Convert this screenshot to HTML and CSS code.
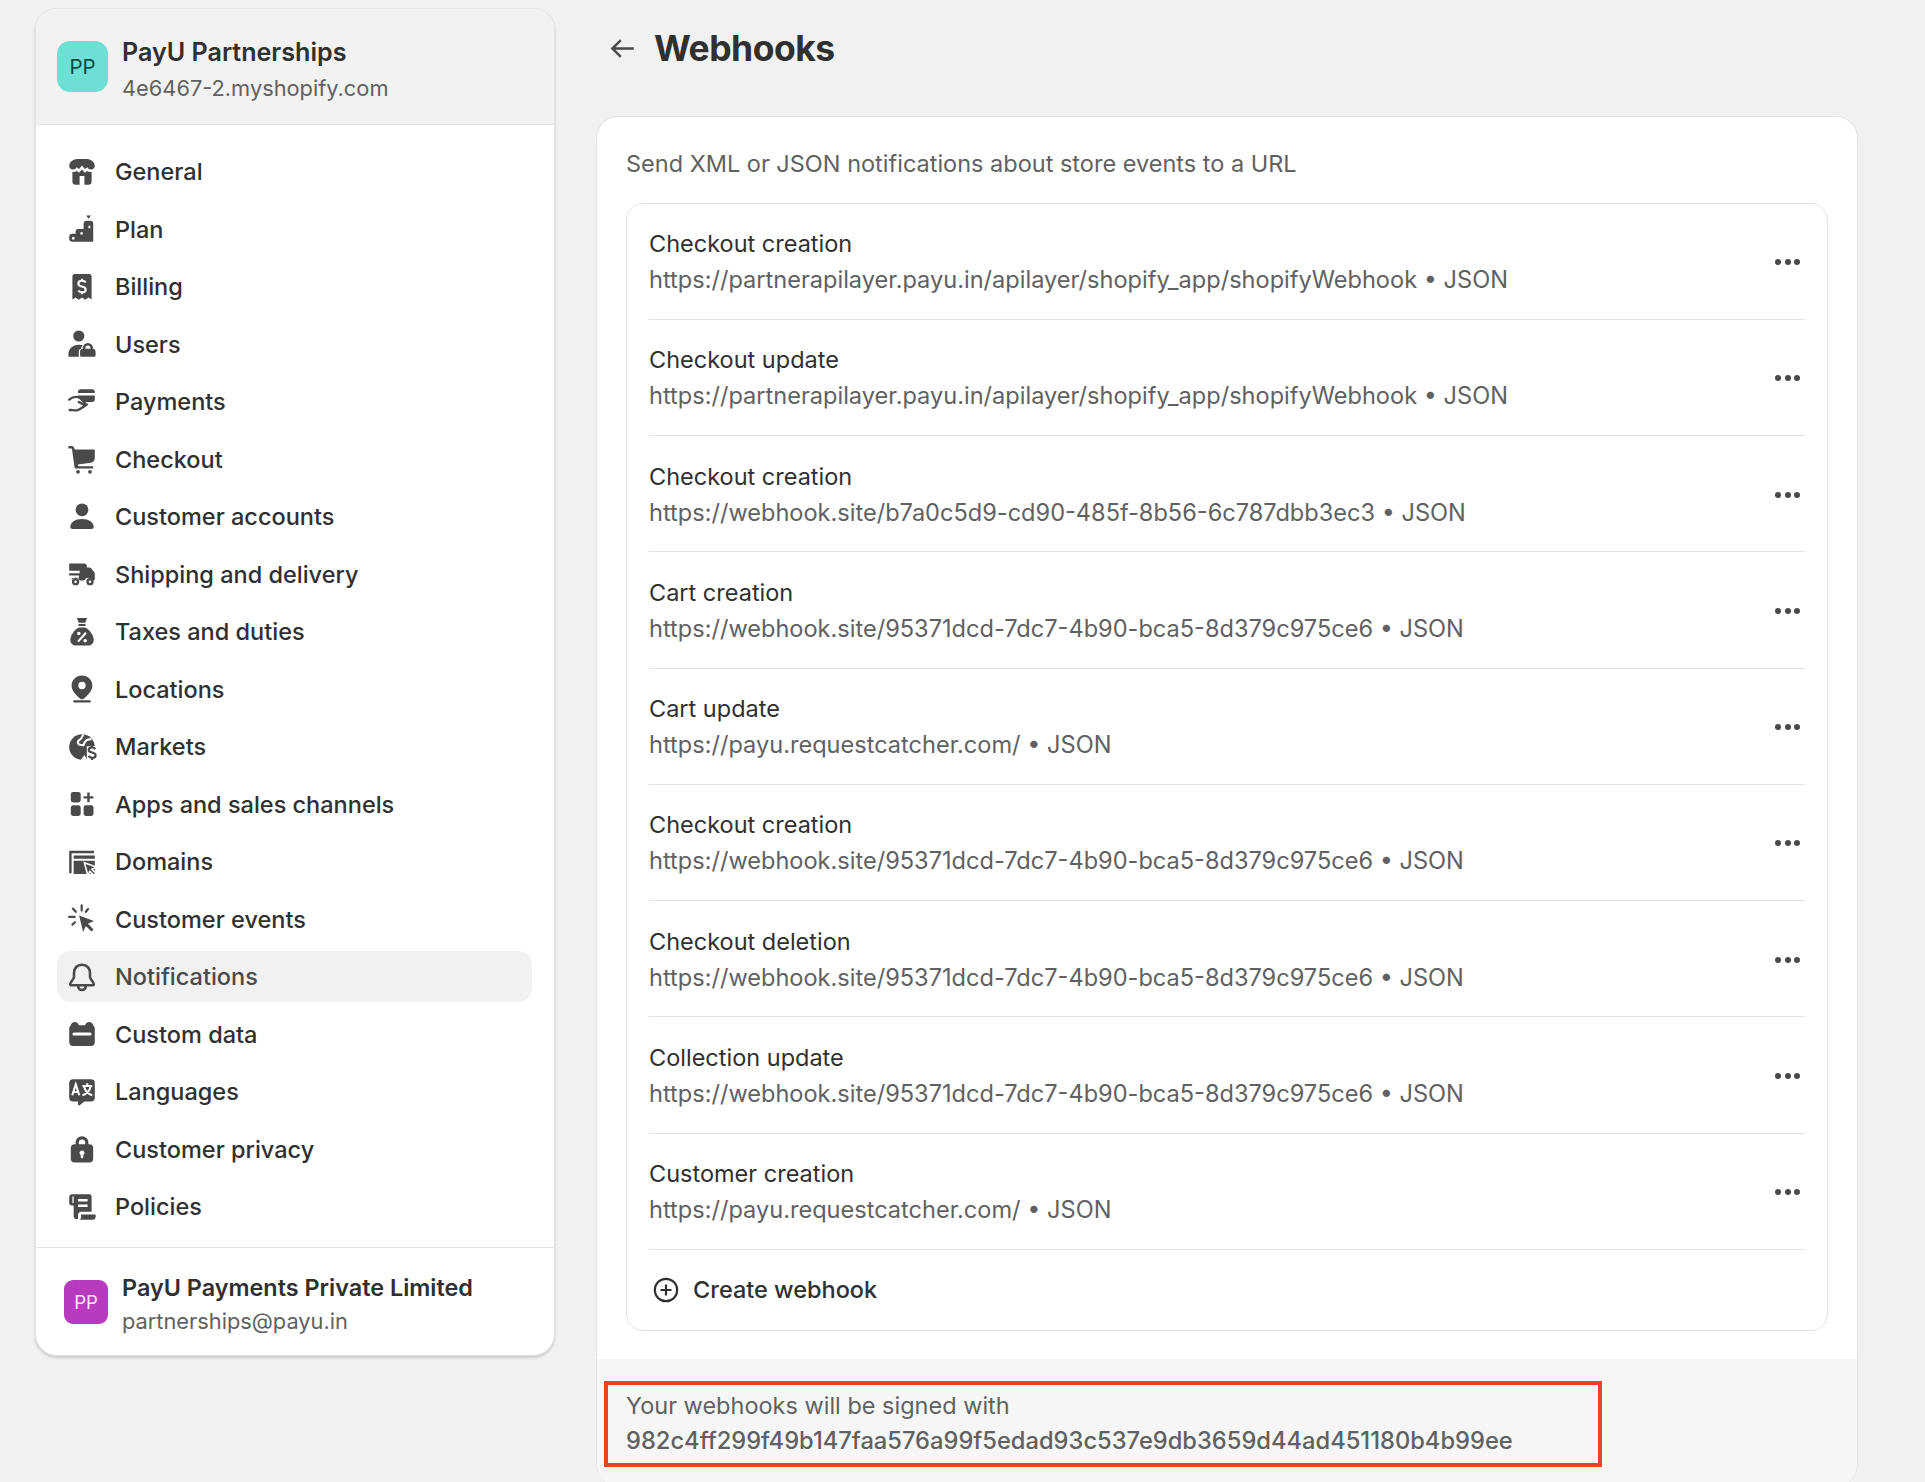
FILE: index.html
```html
<!DOCTYPE html>
<html lang="en">
<head>
<meta charset="utf-8">
<title>Webhooks</title>
<link rel="stylesheet" href="styles.css">
</head>
<body>
<div class="page">
<aside class="sidebar">
  <header class="store">
    <div class="avatar avatar-store">PP</div>
    <div class="who"><div class="who-name">PayU Partnerships</div><div class="who-sub">4e6467-2.myshopify.com</div></div>
  </header>
  <nav class="nav">
    <a class="nav-item"><svg class="ico" viewBox="0 0 20 20"><path d="M4.400 8.400C3 8.400 2 7.500 2 6.200 2 3.800 4.600 1.800 7 1.800h6c2.400 0 5 2 5 4.400 0 1.300-1 2.200-2.400 2.200-1 0-1.800-.5-2.200-1.400l-1.600 1.200L10 6 8.200 8.200 6.600 7c-.4.900-1.200 1.400-2.200 1.400z"/><path fill-rule="evenodd" d="M4 10c1 .1 2-.1 2.800-.6l1.400 1L10 8.500l1.800 1.900 1.400-1c.8.500 1.800.7 2.800.6v6a2 2 0 0 1-2 2H6a2 2 0 0 1-2-2zM8.500 12.500V18h3v-5.500z"/></svg><span>General</span></a>
    <a class="nav-item"><svg class="ico" viewBox="0 0 20 20"><path d="M12.600 1.500h3l-1.500 2.100z"/><path fill-rule="evenodd" d="M13 4.800h2.200A1.800 1.800 0 0 1 17 6.600V18H4a2 2 0 0 1-2-2v-1a2 2 0 0 1 2-2h2v-1.500A1.500 1.500 0 0 1 7.500 10H11V6.800a2 2 0 0 1 2-2zM3.800 15v1.500h1.500V15zM9 12v1.500h1.500V12zM14 8v1.500h1.200V8z"/></svg><span>Plan</span></a>
    <a class="nav-item"><svg class="ico" viewBox="0 0 20 20"><path d="M5.500 1.800h9A1.500 1.500 0 0 1 16 3.300v14.500l-2-1.300-2 1.500-2-1.500-2 1.500-2-1.500-2 1.300V3.300a1.500 1.500 0 0 1 1.500-1.500z"/><path class="cut" d="M12.300 7.200c-.5-.8-1.300-1.100-2.300-1.100-1.300 0-2.300.7-2.300 1.800 0 2.400 4.600 1.200 4.600 3.600 0 1.100-1 1.800-2.300 1.800-1 0-1.800-.4-2.300-1.100M10 4.800v1.300M10 13.300v1.300"/></svg><span>Billing</span></a>
    <a class="nav-item"><svg class="ico" viewBox="0 0 20 20"><circle cx="8" cy="5" r="3.500"/><path d="M1.500 18v-1.500C1.500 13.200 4 10.500 8 10.500c1 0 1.700.1 2.400.4a3 3 0 0 0-1 2.100h-.2c-.5 0-1.200.6-1.200 1.500V18z"/><path fill-rule="evenodd" d="M10.500 13v-.5a3.200 3.200 0 0 1 6.400 0v.5a1.800 1.800 0 0 1 1.600 1.800V17a1 1 0 0 1-1 1H9.800a1 1 0 0 1-1-1v-2.200A1.800 1.800 0 0 1 10.500 13zm1.600 0h3.200v-.5a1.600 1.600 0 0 0-3.200 0z"/></svg><span>Users</span></a>
    <a class="nav-item"><svg class="ico" viewBox="0 0 20 20"><path d="M7.500 3.500c0-.8.700-1.500 1.500-1.500h7.500c.8 0 1.500.7 1.500 1.500v.8H7.500zM7.500 6H18v2.500c0 .8-.7 1.500-1.500 1.500h-5.200L9 7.800H7.500z"/><path class="cut2" d="M2 8.500c2-1.800 4-2 6.300-1.500l3.300 3.300c.5.500-.1 1.500-1.100 1L8 10M2.300 15c1.500-.2 2.700.5 4.500.2 1.500-.3 4.500-2.500 6.200-3.700"/></svg><span>Payments</span></a>
    <a class="nav-item"><svg class="ico" viewBox="0 0 20 20"><path d="M1.500 1.800h2c.8 0 1.500.5 1.700 1.300l.2.900H18v5.500c0 1.500-1.200 2.500-2.500 2.800l-8.100 1.200.2 1H17V16H6.500c-.6 0-1-.4-1.200-1L3.700 3.500H1.500z"/><circle cx="7.500" cy="18" r="1.200"/><circle cx="15" cy="18" r="1.200"/></svg><span>Checkout</span></a>
    <a class="nav-item"><svg class="ico" viewBox="0 0 20 20"><circle cx="10" cy="5.500" r="4"/><path d="M4 17.500c-.8 0-1.300-.5-1.300-1.200 0-2.800 3-5 7.300-5s7.300 2.200 7.300 5c0 .7-.5 1.200-1.300 1.200z"/></svg><span>Customer accounts</span></a>
    <a class="nav-item"><svg class="ico" viewBox="0 0 20 20"><path d="M2 3.500h9.500c.8 0 1.500.7 1.500 1.500v1h1.500c.5 0 1 .2 1.300.6l2 2.500c.2.200.2.500.2.800V13c0 .6-.4 1-1 1h-.6a2.700 2.700 0 0 0-5 0H8.600a2.700 2.700 0 0 0-5-.3v-1.200H8V11H2V9.500h6.500V8H2z"/><path fill-rule="evenodd" d="M6 12.500a2.300 2.300 0 1 0 0 4.600 2.300 2.300 0 0 0 0-4.600zM6 14a.8.800 0 1 1 0 1.600A.8.800 0 0 1 6 14zM15 12.500a2.300 2.300 0 1 0 0 4.600 2.300 2.300 0 0 0 0-4.600zm0 1.500a.8.800 0 1 1 0 1.600.8.800 0 0 1 0-1.600z"/></svg><span>Shipping and delivery</span></a>
    <a class="nav-item"><svg class="ico" viewBox="0 0 20 20"><path d="M6.800 1.200h6.400l-1.200 3H8zM7.800 5h4.400v1.200H7.800z"/><path d="M8 7.200h4c2.800 1.600 5.300 4.800 5.300 7.800 0 2.200-1.500 3.500-3.700 3.500H6.400c-2.200 0-3.700-1.300-3.700-3.500 0-3 2.500-6.200 5.300-7.800z"/><path class="cut" d="M12.500 10.500l-5 5.500"/><circle class="dot" cx="8" cy="11" r="1.100"/><circle class="dot" cx="12" cy="15.500" r="1.100"/></svg><span>Taxes and duties</span></a>
    <a class="nav-item"><svg class="ico" viewBox="0 0 20 20"><path fill-rule="evenodd" d="M10 1.500c3.600 0 6.500 2.800 6.500 6.300 0 3.200-2.300 5.500-5 8-.9.800-2.100.8-3 0-2.700-2.500-5-4.800-5-8 0-3.500 2.900-6.300 6.500-6.300zm0 4a2.300 2.300 0 1 0 0 4.600 2.300 2.300 0 0 0 0-4.600z"/><rect x="4.500" y="17" width="11" height="1.500" rx=".7"/></svg><span>Locations</span></a>
    <a class="nav-item"><svg class="ico" viewBox="0 0 20 20"><circle cx="10" cy="10" r="8"/><path class="cut" d="M10.800 2.200c-.6 1.300-.8 2.300-2 3-1 .6-1.700 1.500-1.200 2.600.6 1.200 2.300.8 3.300 1.100.4-1.300.9-2.800 2.200-3.300 1-.4 1.800-.5 2.800-.5"/><path class="dot" d="M13 9.500h8v10h-8z"/><path class="dot" d="M9 18.500l2.500-3.500 2 3.500z"/><path class="cut3" d="M18.300 11.400c-.4-.8-1.100-1.200-2-1.200-1.200 0-2.100.6-2.100 1.600 0 2.200 4.300 1.100 4.300 3.300 0 1-1 1.700-2.200 1.700-1 0-1.700-.4-2.200-1.200M16.300 8.700v1.500M16.300 16.800v1.400"/></svg><span>Markets</span></a>
    <a class="nav-item"><svg class="ico" viewBox="0 0 20 20"><rect x="3" y="2.500" width="6.200" height="6.500" rx="1.500"/><rect x="3" y="10.800" width="6.200" height="6.700" rx="1.500"/><rect x="11" y="10.800" width="6.200" height="6.700" rx="1.500"/><path d="M13.300 2.800h1.500v2.300h2.300v1.500h-2.300v2.300h-1.500V6.600H11V5.100h2.300z"/></svg><span>Apps and sales channels</span></a>
    <a class="nav-item"><svg class="ico" viewBox="0 0 20 20"><path d="M2 3h15.500v1.500H3.500V17H2z"/><path d="M4.800 6H18v2H4.800zM4.800 9.200H18v8.300H4.800z"/><path class="arrow" d="M11.500 10.500l7.500 2.700-2.800 1.300 2.500 2.500-1.300 1.300-2.500-2.500-1.200 2.800z"/></svg><span>Domains</span></a>
    <a class="nav-item"><svg class="ico" viewBox="0 0 20 20"><path d="M8.200 7.800l9.300 3.500-3.800 1.700 3.500 3.500-1.300 1.300-3.500-3.500-1.700 3.800z"/><path class="cut2 thick" d="M9.800 1.500v3.200M4.300 3.500l1.800 2M2 8.700h3.400M4 13.500l1.600-1.500M13.800 3.800l-1.400 1.700"/></svg><span>Customer events</span></a>
    <a class="nav-item active"><svg class="ico" viewBox="0 0 20 20"><path class="line" d="M10 2.300c-3 0-5 2.200-5 5V10c0 1.300-2.400 3.200-2.400 4.400 0 .5.400.8 1 .8h12.800c.6 0 1-.3 1-.8 0-1.200-2.400-3.100-2.400-4.400V7.300c0-2.800-2-5-5-5z"/><path class="line" d="M7.600 15.300c0 1.700 1 2.800 2.400 2.800s2.400-1.100 2.400-2.800"/></svg><span>Notifications</span></a>
    <a class="nav-item"><svg class="ico" viewBox="0 0 20 20"><path fill-rule="evenodd" d="M5.500 2.500c1.300 0 2.300.9 2.500 2h4c.2-1.100 1.200-2 2.500-2s2.300.9 2.500 2.200c.6.400 1 1.100 1 1.800V15a2.500 2.500 0 0 1-2.500 2.500h-11A2.500 2.500 0 0 1 2 15V6.500c0-.7.400-1.400 1-1.800.2-1.300 1.200-2.200 2.500-2.200zM5 9a1 1 0 0 0 0 2h10a1 1 0 0 0 0-2z"/></svg><span>Custom data</span></a>
    <a class="nav-item"><svg class="ico" viewBox="0 0 20 20"><path d="M4.500 2h11A2.500 2.500 0 0 1 18 4.500v9a2.500 2.500 0 0 1-2.500 2.500h-4l-3 2.300c-.5.300-1-.1-1-.6V16h-3A2.500 2.500 0 0 1 2 13.500v-9A2.500 2.500 0 0 1 4.500 2z"/><path class="cut" d="M3.900 12l2.200-6.800L8.300 12M4.700 10h2.900M10.300 6.300h6.100M13.300 4.500v1.800M11.300 6.300c.4 2.500 2.500 4.800 5.100 5.700M15.400 6.300c-.4 2.500-2.500 4.800-5.100 5.700"/></svg><span>Languages</span></a>
    <a class="nav-item"><svg class="ico" viewBox="0 0 20 20"><path fill-rule="evenodd" d="M6 7V6a4 4 0 0 1 8 0v1h.5A2.500 2.500 0 0 1 17 9.500V16a2.500 2.500 0 0 1-2.500 2.500h-9A2.500 2.500 0 0 1 3 16V9.500A2.500 2.500 0 0 1 5.500 7zm2 0h4V6a2 2 0 0 0-4 0zm2 4a1.500 1.500 0 0 0-.8 2.800V15a.8.800 0 0 0 1.600 0v-1.200A1.500 1.500 0 0 0 10 11z"/></svg><span>Customer privacy</span></a>
    <a class="nav-item"><svg class="ico" viewBox="0 0 20 20"><path fill-rule="evenodd" d="M4 2h10.500A1.500 1.500 0 0 1 16 3.500V13H9.300c-.9 0-1.800.8-1.800 2v2.500H6A1.500 1.500 0 0 1 4.800 16V9H3.500A1.500 1.500 0 0 1 2 7.500V4a2 2 0 0 1 2-2zm0 1.500v4h.8v-4zM7.500 5v1.500h6V5zM7.500 8.500V10h6V8.500z"/><path d="M9.300 14.700h9.200V16a2 2 0 0 1-2 2H8.700c.5-.5.800-1.200.8-2z"/></svg><span>Policies</span></a>
  </nav>
  <footer class="account">
    <div class="avatar avatar-user">PP</div>
    <div class="who"><div class="who-name small">PayU Payments Private Limited</div><div class="who-sub small">partnerships@payu.in</div></div>
  </footer>
</aside>
<main class="content">
  <div class="title-bar">
    <svg class="back" viewBox="0 0 24 24"><path d="M22 12H3M10.500 4.500 3 12l7.500 7.500"/></svg>
    <h1>Webhooks</h1>
  </div>
  <section class="card">
    <div class="card-body">
      <p class="intro">Send XML or JSON notifications about store events to a URL</p>
      <div class="list">
        <div class="row"><div class="row-text"><div class="row-title">Checkout creation</div><div class="row-url">https://partnerapilayer.payu.in/apilayer/shopify_app/shopifyWebhook • JSON</div></div><div class="dots"><i></i><i></i><i></i></div></div>
        <div class="row"><div class="row-text"><div class="row-title">Checkout update</div><div class="row-url">https://partnerapilayer.payu.in/apilayer/shopify_app/shopifyWebhook • JSON</div></div><div class="dots"><i></i><i></i><i></i></div></div>
        <div class="row"><div class="row-text"><div class="row-title">Checkout creation</div><div class="row-url">https://webhook.site/b7a0c5d9-cd90-485f-8b56-6c787dbb3ec3 • JSON</div></div><div class="dots"><i></i><i></i><i></i></div></div>
        <div class="row"><div class="row-text"><div class="row-title">Cart creation</div><div class="row-url">https://webhook.site/95371dcd-7dc7-4b90-bca5-8d379c975ce6 • JSON</div></div><div class="dots"><i></i><i></i><i></i></div></div>
        <div class="row"><div class="row-text"><div class="row-title">Cart update</div><div class="row-url">https://payu.requestcatcher.com/ • JSON</div></div><div class="dots"><i></i><i></i><i></i></div></div>
        <div class="row"><div class="row-text"><div class="row-title">Checkout creation</div><div class="row-url">https://webhook.site/95371dcd-7dc7-4b90-bca5-8d379c975ce6 • JSON</div></div><div class="dots"><i></i><i></i><i></i></div></div>
        <div class="row"><div class="row-text"><div class="row-title">Checkout deletion</div><div class="row-url">https://webhook.site/95371dcd-7dc7-4b90-bca5-8d379c975ce6 • JSON</div></div><div class="dots"><i></i><i></i><i></i></div></div>
        <div class="row"><div class="row-text"><div class="row-title">Collection update</div><div class="row-url">https://webhook.site/95371dcd-7dc7-4b90-bca5-8d379c975ce6 • JSON</div></div><div class="dots"><i></i><i></i><i></i></div></div>
        <div class="row"><div class="row-text"><div class="row-title">Customer creation</div><div class="row-url">https://payu.requestcatcher.com/ • JSON</div></div><div class="dots"><i></i><i></i><i></i></div></div>
        <div class="create"><svg class="plus" viewBox="0 0 26 26"><circle cx="13" cy="13" r="11.200"/><path d="M13 7.500v11M7.500 13h11"/></svg><span>Create webhook</span></div>
      </div>
    </div>
    <div class="card-foot">
      <div class="signed">
        <div class="signed-label">Your webhooks will be signed with</div>
        <div class="signed-key">982c4ff299f49b147faa576a99f5edad93c537e9db3659d44ad451180b4b99ee</div>
      </div>
    </div>
  </section>
</main>
</div>
</body>
</html>
```

FILE: styles.css
```css
* { box-sizing: border-box; }
html, body { margin: 0; height: 1482px; overflow: hidden; }
body { background: #f1f1f1; font-family: Inter, "Liberation Sans", sans-serif; color: #303030; font-size: 23.500px; }
.page { display: flex; align-items: flex-start; gap: 41px; padding: 8px 0 0 35px; }

.sidebar { width: 520px; height: 1348px; flex: none; background: #fff; border: 1.500px solid #e3e3e3; border-radius: 22px; overflow: hidden; box-shadow: 0 2px 3px rgba(0,0,0,.16); display: flex; flex-direction: column; }
.store { height: 116px; flex: none; background: #f2f2f2; border-bottom: 1.500px solid #e3e3e3; display: flex; align-items: flex-start; gap: 14px; padding: 25px 0 0 21px; }
.avatar { flex: none; display: flex; align-items: center; justify-content: center; }
.avatar-store { width: 51px; height: 51px; margin-top: 7px; border-radius: 13px; background: #6ee0d3; color: #0f4a44; font-size: 20.500px; }
.avatar-user { width: 44px; height: 44px; margin: 9px 0 0 8px; border-radius: 9px; background: #b83bbd; color: #fbe6fb; font-size: 18.500px; }
.who { min-width: 0; }
.who-name { font-size: 25.100px; font-weight: 600; line-height: 36px; color: #303030; }
.who-name.small { font-size: 23.400px; line-height: 34px; }
.who-sub { font-size: 21.800px; line-height: 36px; color: #616161; }
.who-sub.small { line-height: 32px; }

.nav { flex: none; display: flex; flex-direction: column; gap: 6.500px; padding: 21px 22px 0 21px; }
.nav-item { height: 51px; display: flex; align-items: center; gap: 17px; padding-left: 9px; border-radius: 14px; font-weight: 500; color: #303030; }
.nav-item.active { background: #f1f1f1; color: #4a4a4a; }
.ico { width: 32px; height: 32px; flex: none; fill: #4a4a4a; }
.ico .cut { fill: none; stroke: #fff; stroke-width: 1.300; }
.ico .cut2 { fill: none; stroke: #4a4a4a; stroke-width: 1.500; stroke-linecap: round; stroke-linejoin: round; }
.ico .cut2.thick { stroke-width: 1.400; }
.ico .cut3 { fill: none; stroke: #4a4a4a; stroke-width: 1.400; }
.ico .dot { fill: #fff; }
.ico .arrow { fill: #4a4a4a; stroke: #fff; stroke-width: 1; }
.ico .line { fill: none; stroke: #4a4a4a; stroke-width: 1.600; stroke-linejoin: round; }

.account { margin-top: 15px; border-top: 1.500px solid #e3e3e3; flex: 1; display: flex; align-items: flex-start; gap: 14px; padding: 23px 0 0 20px; }

.content { width: 1262px; flex: none; }
.title-bar { height: 108px; display: flex; align-items: flex-start; gap: 18px; padding: 23px 0 0 13px; }
.back { width: 27px; height: 27px; margin-top: 4px; flex: none; fill: none; stroke: #4a4a4a; stroke-width: 2.200; }
h1 { margin: 0; font-size: 35.500px; line-height: 36px; font-weight: 700; color: #303030; letter-spacing: -.5px; }

.card { height: 1370px; background: #fff; border: 1.500px solid #e3e3e3; border-bottom: 0; border-radius: 22px; overflow: hidden; display: flex; flex-direction: column; }
.card-body { height: 1242px; flex: none; padding: 29px 29px 0 29px; }
.intro { margin: 0 0 20.600px; font-size: 23.500px; line-height: 36px; color: #616161; }
.list { border: 1.500px solid #e3e3e3; border-radius: 17px; padding: 0 22px; }
.row { height: 116.250px; padding-top: 2px; border-bottom: 1.500px solid #e3e3e3; display: flex; align-items: center; justify-content: space-between; }
.row-title { font-size: 23.500px; line-height: 36px; color: #303030; }
.row-url { font-size: 23.570px; line-height: 36px; color: #616161; }
.dots { display: flex; gap: 3.500px; margin-right: 5px; }
.dots i { display: block; width: 6px; height: 6px; border-radius: 50%; background: #4a4a4a; }
.create { height: 80px; display: flex; align-items: center; gap: 14px; padding-left: 4px; font-weight: 500; }
.plus { width: 26px; height: 26px; flex: none; fill: none; stroke: #303030; stroke-width: 2.200; }

.card-foot { flex: 1; background: #f6f6f6; padding: 22px 0 0 7px; }
.signed { width: 998px; height: 86px; border: 4.500px solid #ea4426; padding: 3px 0 0 18px; }
.signed-label { font-size: 23.500px; line-height: 35px; color: #616161; }
.signed-key { font-size: 23.700px; line-height: 36px; font-weight: 500; color: #616161; }
```
